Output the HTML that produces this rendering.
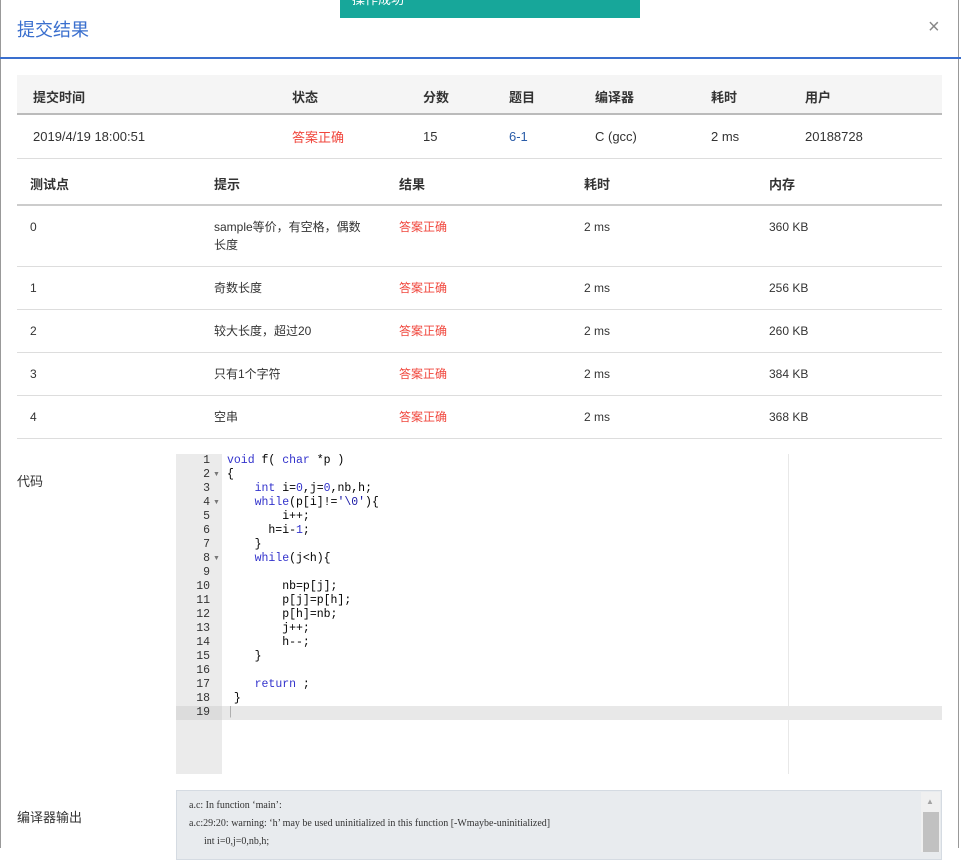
<!DOCTYPE html>
<html><head><meta charset="utf-8"><style>
*{box-sizing:border-box;margin:0;padding:0}
body{width:961px;height:848px;overflow:hidden;background:#fff;font-family:"Liberation Sans","Noto Sans CJK SC",sans-serif;font-size:13px;color:#333;position:relative}
.modal{position:absolute;left:0;top:0;width:959px;height:848px;border-left:1px solid #999;border-right:1px solid #999}
.title{position:absolute;left:17px;top:16px;font-size:18px;color:#3a6fce}
.close{position:absolute;left:928px;top:16px;font-size:20px;color:#888}
.hline{position:absolute;left:0;top:57px;width:961px;height:2px;background:#3a6fce}
.toast{position:absolute;left:340px;top:0;width:300px;height:18px;background:#17a79a;color:#fff;font-size:13px;padding-left:12px;line-height:0}
.a{position:absolute;white-space:nowrap}
pre.a{white-space:pre}
.red{color:#f0463c}
.row{position:absolute;left:17px;width:925px;border-bottom:1px solid #ddd}
.mono{font-family:"Liberation Mono",monospace;font-size:11.5px}
</style></head><body>
<div class="modal"></div>
<div class="toast">操作成功</div>
<div class="title">提交结果</div>
<div class="close">×</div>
<div class="hline"></div>

<div class="row" style="top:75px;height:40px;background:#f5f5f5;border-bottom:2px solid #bbb"></div>
<div class="row" style="top:115px;height:44px"></div>
<div class="a" style="left:33px;top:87px;font-weight:bold">提交时间</div>
<div class="a" style="left:292px;top:87px;font-weight:bold">状态</div>
<div class="a" style="left:423px;top:87px;font-weight:bold">分数</div>
<div class="a" style="left:509px;top:87px;font-weight:bold">题目</div>
<div class="a" style="left:595px;top:87px;font-weight:bold">编译器</div>
<div class="a" style="left:711px;top:87px;font-weight:bold">耗时</div>
<div class="a" style="left:805px;top:87px;font-weight:bold">用户</div>
<div class="a" style="left:33px;top:129px">2019/4/19 18:00:51</div>
<div class="a red" style="left:292px;top:127px">答案正确</div>
<div class="a" style="left:423px;top:129px">15</div>
<div class="a" style="left:509px;top:129px;color:#2a5ca8">6-1</div>
<div class="a" style="left:595px;top:129px">C (gcc)</div>
<div class="a" style="left:711px;top:129px">2 ms</div>
<div class="a" style="left:805px;top:129px">20188728</div>

<div class="row" style="top:159px;height:47px;border-bottom:2px solid #ccc"></div>
<div class="a" style="left:30px;top:174px;font-weight:bold">测试点</div>
<div class="a" style="left:214px;top:174px;font-weight:bold">提示</div>
<div class="a" style="left:399px;top:174px;font-weight:bold">结果</div>
<div class="a" style="left:584px;top:174px;font-weight:bold">耗时</div>
<div class="a" style="left:769px;top:174px;font-weight:bold">内存</div>

<div class="row" style="top:206px;height:61px"></div>
<div class="a" style="left:30px;top:220px;font-size:12px">0</div>
<div class="a" style="left:214px;top:218px;font-size:12px;line-height:18px">sample等价，有空格，偶数<br>长度</div>
<div class="a red" style="left:399px;top:218px;font-size:12px">答案正确</div>
<div class="a" style="left:584px;top:220px;font-size:12px">2 ms</div>
<div class="a" style="left:769px;top:220px;font-size:12px">360 KB</div>

<div class="row" style="top:267px;height:43px"></div>
<div class="a" style="left:30px;top:281px;font-size:12px">1</div>
<div class="a" style="left:214px;top:279px;font-size:12px">奇数长度</div>
<div class="a red" style="left:399px;top:279px;font-size:12px">答案正确</div>
<div class="a" style="left:584px;top:281px;font-size:12px">2 ms</div>
<div class="a" style="left:769px;top:281px;font-size:12px">256 KB</div>

<div class="row" style="top:310px;height:43px"></div>
<div class="a" style="left:30px;top:324px;font-size:12px">2</div>
<div class="a" style="left:214px;top:322px;font-size:12px">较大长度，超过20</div>
<div class="a red" style="left:399px;top:322px;font-size:12px">答案正确</div>
<div class="a" style="left:584px;top:324px;font-size:12px">2 ms</div>
<div class="a" style="left:769px;top:324px;font-size:12px">260 KB</div>

<div class="row" style="top:353px;height:43px"></div>
<div class="a" style="left:30px;top:367px;font-size:12px">3</div>
<div class="a" style="left:214px;top:365px;font-size:12px">只有1个字符</div>
<div class="a red" style="left:399px;top:365px;font-size:12px">答案正确</div>
<div class="a" style="left:584px;top:367px;font-size:12px">2 ms</div>
<div class="a" style="left:769px;top:367px;font-size:12px">384 KB</div>

<div class="row" style="top:396px;height:43px"></div>
<div class="a" style="left:30px;top:410px;font-size:12px">4</div>
<div class="a" style="left:214px;top:408px;font-size:12px">空串</div>
<div class="a red" style="left:399px;top:408px;font-size:12px">答案正确</div>
<div class="a" style="left:584px;top:410px;font-size:12px">2 ms</div>
<div class="a" style="left:769px;top:410px;font-size:12px">368 KB</div>

<div class="a" style="left:17px;top:471px">代码</div>
<div class="a" style="left:176px;top:454px;width:46px;height:320px;background:#ebebeb"></div>
<div class="a" style="left:176px;top:706px;width:766px;height:14px;background:#e8e8e8"></div>
<div class="a" style="left:176px;top:706px;width:46px;height:14px;background:#dcdcdc"></div>
<div class="a" style="left:788px;top:454px;width:1px;height:320px;background:#e8e8e8"></div>
<pre class="a mono" style="left:180px;top:454px;width:30px;text-align:right;line-height:14px;color:#333">1
2
3
4
5
6
7
8
9
10
11
12
13
14
15
16
17
18
19</pre>
<div class="a" style="left:213px;top:471px;font-size:7px;color:#777">▼</div>
<div class="a" style="left:213px;top:499px;font-size:7px;color:#777">▼</div>
<div class="a" style="left:213px;top:555px;font-size:7px;color:#777">▼</div>
<pre class="a mono" style="left:227px;top:454px;line-height:14px;color:#000"><span style="color:#33c">void</span> f( <span style="color:#33c">char</span> *p )
{
    <span style="color:#33c">int</span> i=<span style="color:#33c">0</span>,j=<span style="color:#33c">0</span>,nb,h;
    <span style="color:#33c">while</span>(p[i]!=<span style="color:#1a1aa6">'\0'</span>){
        i++;
      h=i-<span style="color:#33c">1</span>;
    }
    <span style="color:#33c">while</span>(j&lt;h){

        nb=p[j];
        p[j]=p[h];
        p[h]=nb;
        j++;
        h--;
    }

    <span style="color:#33c">return</span> ;
 }
<span style="color:#aaa">|</span></pre>

<div class="a" style="left:17px;top:807px">编译器输出</div>
<div class="a" style="left:176px;top:790px;width:766px;height:70px;background:#e8ebee;border:1px solid #d5dbe2"></div>
<div class="a" style="left:921px;top:792px;width:19px;height:60px;background:#f0f0f0"></div>
<div class="a" style="left:923px;top:812px;width:16px;height:40px;background:#c1c1c1"></div>
<div class="a" style="left:926px;top:797px;font-size:8px;color:#a3a3a3">▲</div>
<pre class="a" style="left:189px;top:797px;font-family:'Liberation Serif','Noto Serif CJK SC',serif;font-size:10px;line-height:18px;color:#333">a.c: In function ‘main’:
a.c:29:20: warning: ‘h’ may be used uninitialized in this function [-Wmaybe-uninitialized]
      int i=0,j=0,nb,h;</pre>
</body></html>
